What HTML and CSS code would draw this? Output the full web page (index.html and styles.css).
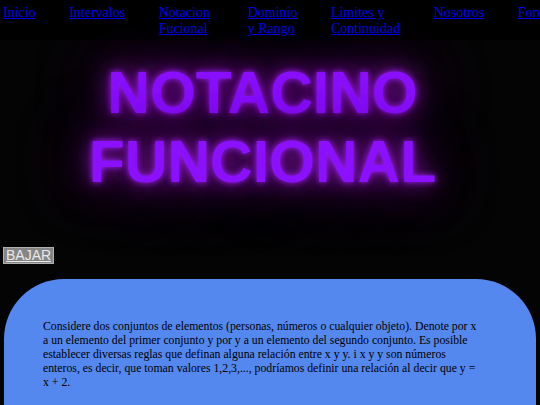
FILE: index.html
```html
<!DOCTYPE html>
<html lang="es">
<head>
<meta charset="utf-8">
<title>Notacion Funcional</title>
<link rel="stylesheet" href="styles.css">
</head>
<body>
<nav class="nav">
  <ul class="nav-list">
    <li class="nav-item"><a href="#">Inicio</a></li>
    <li class="nav-item"><a href="#">Intervalos</a></li>
    <li class="nav-item nav-item-wide"><a href="#">Notacion Fucional</a></li>
    <li class="nav-item"><a href="#">Dominio y Rango</a></li>
    <li class="nav-item"><a href="#">Limites y Continuidad</a></li>
    <li class="nav-item"><a href="#">Nosotros</a></li>
    <li class="nav-item"><a href="#">Foro</a></li>
  </ul>
</nav>
<header class="hero">
  <h1 class="title">NOTACINO<br>FUNCIONAL</h1>
</header>
<div class="actions">
  <a class="btn-down" href="#contenido">BAJAR</a>
</div>
<section class="card" id="contenido">
  <p class="card-text">Considere dos conjuntos de elementos (personas, números o cualquier objeto). Denote por x a un elemento del primer conjunto y por y a un elemento del segundo conjunto. Es posible establecer diversas reglas que definan alguna relación entre x y y. i x y y son números enteros, es decir, que toman valores 1,2,3,..., podríamos definir una relación al decir que y = x + 2.</p>
</section>
</body>
</html>
```
FILE: styles.css
```css
html, body {
  margin: 0;
  padding: 0;
}
body {
  background: #050405;
  font-family: "Liberation Serif", "Times New Roman", serif;
  overflow: hidden;
  min-height: 405px;
}
.nav {
  background: #000;
  height: 40px;
  overflow: hidden;
}
.nav-list {
  list-style: none;
  margin: 0;
  padding: 5px 0 0 3px;
  display: flex;
  gap: 33.5px;
  font-size: 14px;
  line-height: 16px;
}
.nav-item {
  flex: none;
  width: min-content;
}
.nav-item-wide {
  width: 55.5px;
}
.nav-item a {
  color: #0000ee;
}
.hero {
  padding: 19px 15px 0 0;
  text-align: center;
}
.title {
  margin: 0;
  font-family: "Liberation Sans", Arial, sans-serif;
  font-weight: bold;
  font-size: 59px;
  line-height: 69px;
  color: #8b10ff;
  text-shadow: 0 0 6px #a020ff, 0 0 20px #8a10b0, 0 0 45px #6a1a80, 0 0 70px #4a1058;
}
.actions {
  display: flex;
  padding: 50px 0 0 3px;
}
.btn-down {
  display: block;
  background: #858585;
  border: 1px solid #b0b0b0;
  color: #e8e8e8;
  font-family: "Liberation Sans", Arial, sans-serif;
  font-size: 14px;
  line-height: 15px;
  padding: 0 2px;
}
.card {
  margin: 15px 4px 0;
  background: #5588ee;
  border-radius: 60px 60px 0 0;
  padding: 41px 56px 40px 39px;
  min-height: 200px;
}
.card-text {
  margin: 0;
  font-size: 11.75px;
  line-height: 14px;
  color: #000;
}
```
